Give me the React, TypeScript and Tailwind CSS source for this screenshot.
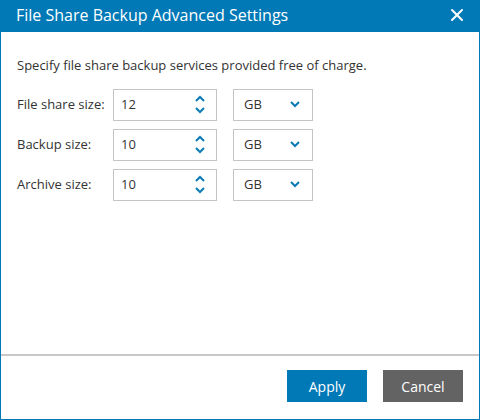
import { HiX } from 'react-icons/hi';

const rows = [
  { label: 'File share size:', value: '12' },
  { label: 'Backup size:', value: '10' },
  { label: 'Archive size:', value: '10' },
];

function Chevron({ up }: { up?: boolean }) {
  return (
    <svg width="10" height="7" viewBox="0 0 10 7" className="text-[#0a7ab5]">
      <path d={up ? 'M1 6 L5 2 L9 6' : 'M1 1 L5 5 L9 1'} fill="none" stroke="currentColor" strokeWidth="2" />
    </svg>
  );
}

export default function App() {
  return (
    <div className="w-[480px] h-[420px] flex flex-col bg-white font-['Open_Sans',sans-serif] text-[13px] text-[#333]">
      <div className="h-8 shrink-0 bg-[#0079b6] flex items-center justify-between pl-4 pr-[13px] pb-[2px] text-white">
        <span className="text-[16px]">File Share Backup Advanced Settings</span>
        <HiX className="w-5 h-5" />
      </div>
      <div className="flex-1 flex flex-col border-x border-b border-[#0079b6]">
        <div className="flex-1 pl-4 pt-[24px]">
          <p className="mb-[13px]">Specify file share backup services provided free of charge.</p>
          <div className="flex flex-col gap-2">
            {rows.map(r => (
              <div key={r.label} className="flex items-center">
                <span className="w-[96px]">{r.label}</span>
                <div className="w-[104px] h-8 border border-[#c4c4c4] flex items-center justify-between pl-[7px] pr-[11px]">
                  <span>{r.value}</span>
                  <div className="flex flex-col gap-[5px]">
                    <Chevron up />
                    <Chevron />
                  </div>
                </div>
                <div className="ml-4 w-20 h-8 border border-[#c4c4c4] flex items-center justify-between pl-[10px] pr-[12px]">
                  <span>GB</span>
                  <Chevron />
                </div>
              </div>
            ))}
          </div>
        </div>
        <div className="h-[65px] shrink-0 border-t-2 border-[#c8c8c8] flex items-center justify-end gap-4 pr-4 pb-[3px]">
          <button className="w-20 h-8 bg-[#0079b6] text-white text-[14px]">Apply</button>
          <button className="w-20 h-8 bg-[#636363] text-white text-[14px]">Cancel</button>
        </div>
      </div>
    </div>
  );
}
